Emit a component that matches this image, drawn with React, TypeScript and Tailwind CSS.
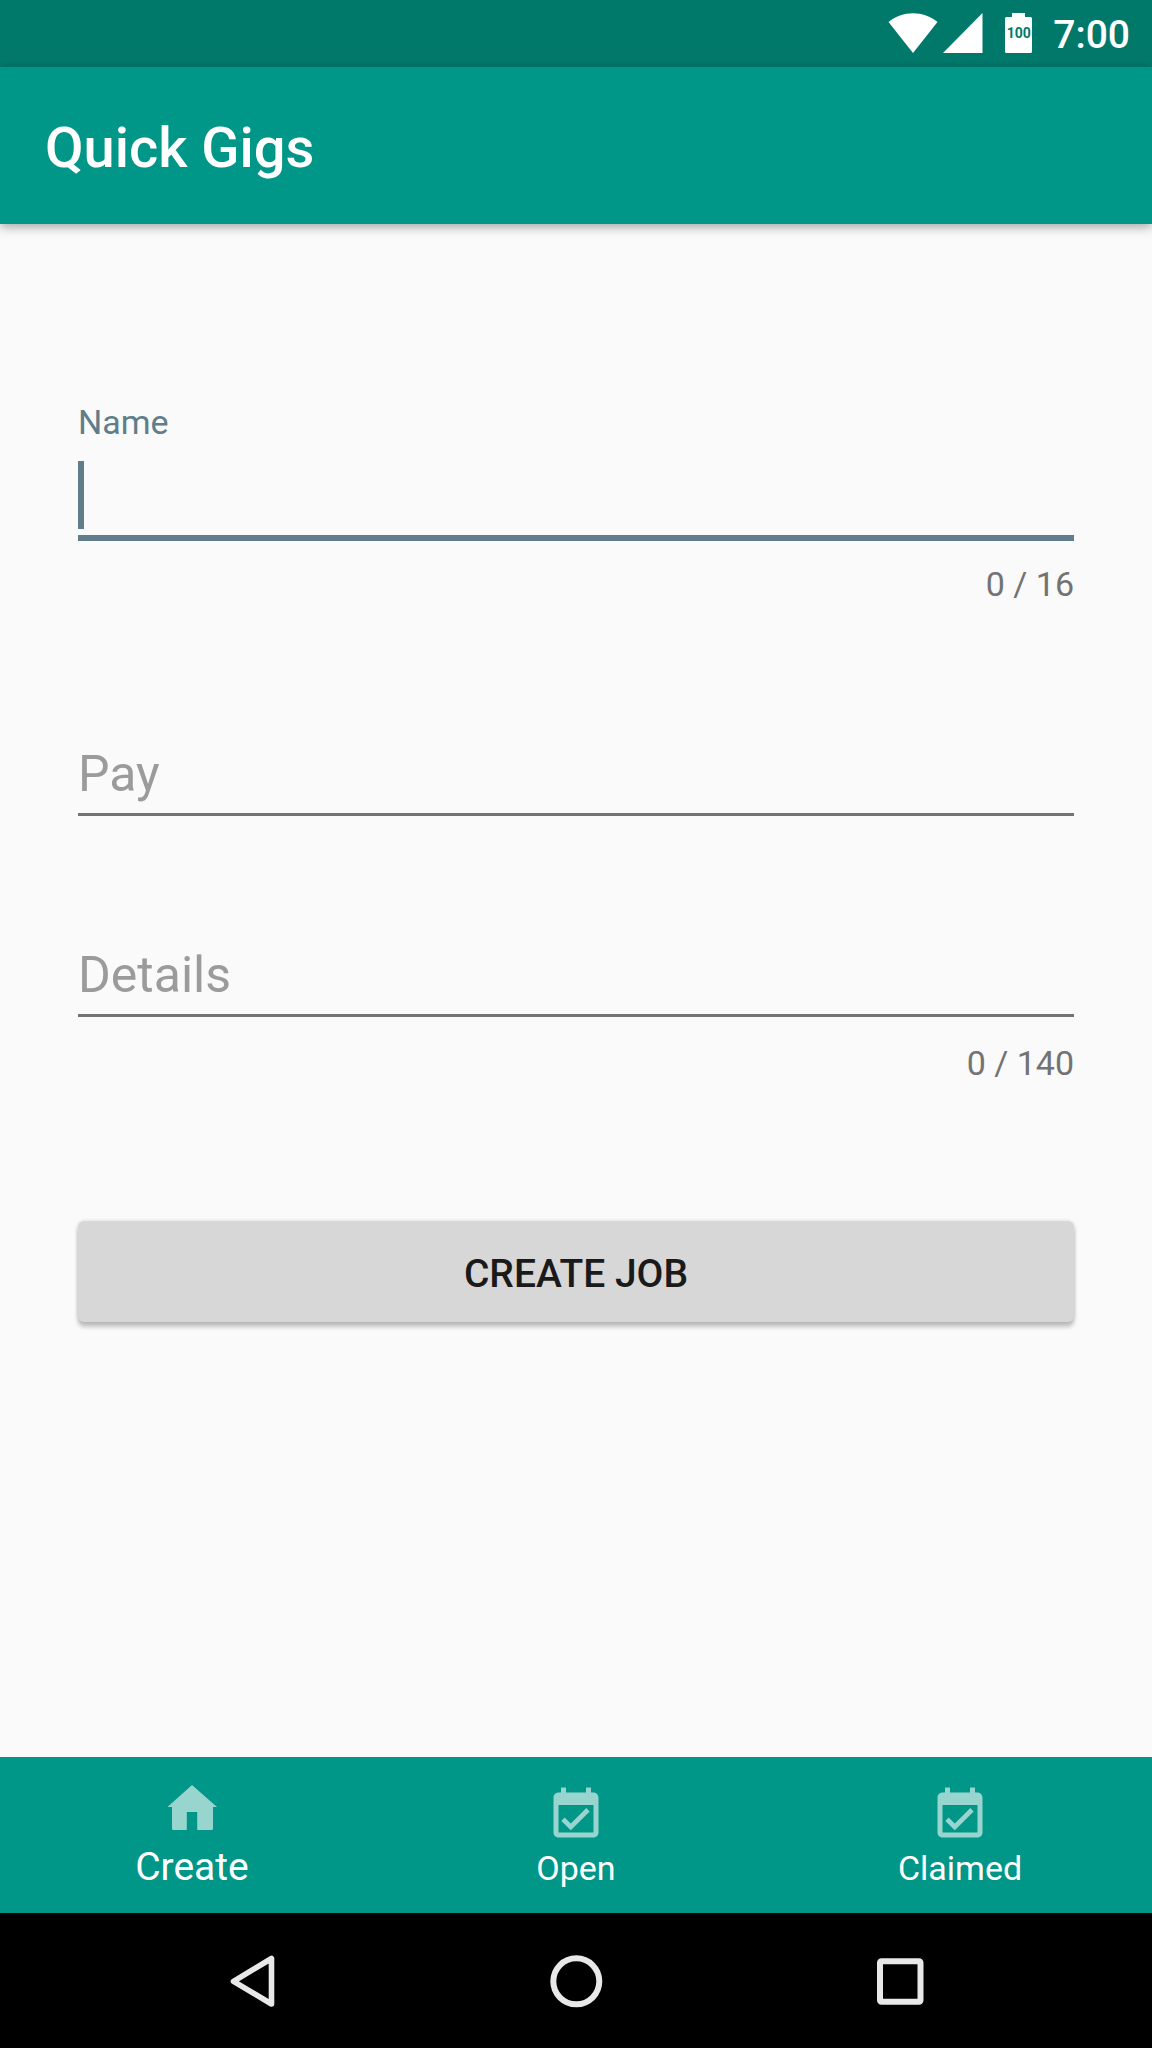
import { useState } from "react";
import clsx from "clsx";

type FieldProps = {
  id: string;
  label: string;
  max?: number;
  active: boolean;
  onActivate: (id: string) => void;
};

function TextField({ id, label, max, active, onActivate }: FieldProps) {
  const [value, setValue] = useState("");
  const floating = active || value !== "";

  return (
    <div>
      <div className="relative pt-[59px]">
        <label
          htmlFor={id}
          className={clsx(
            "pointer-events-none absolute left-0",
            floating ? "top-0 text-[34px] leading-10" : "top-[59px] text-[50px] leading-[70px]",
            active ? "text-[#607d8b]" : "text-[#9b9b9b]",
          )}
        >
          {label}
        </label>
        <input
          id={id}
          type="text"
          maxLength={max}
          value={value}
          onFocus={() => onActivate(id)}
          onChange={(e) => setValue(e.target.value)}
          className="block h-[74px] w-full bg-transparent text-[50px] leading-[70px] text-[#212121] caret-[#607d8b] outline-none"
        />
        {active && value === "" && (
          <span className="pointer-events-none absolute top-[59px] left-0 h-[68px] w-[6px] bg-[#607d8b]" />
        )}
      </div>
      <div className="h-[6px]">
        <div className={active ? "h-[6px] bg-[#607d8b]" : "h-[3px] bg-[#737373]"} />
      </div>
      {max && (
        <p className="pt-[23px] pb-[14px] text-right text-[34px] leading-10 text-[#737373]">
          {value.length} / {max}
        </p>
      )}
    </div>
  );
}

function StatusBar() {
  return (
    <div className="flex h-[67px] items-start justify-end bg-[#00796b] pt-[13px] pr-[22px] text-white">
      <svg className="h-10 w-[50px]" viewBox="0 0 50 40" fill="currentColor">
        <path d="M0.5 9C7.500 3.200 16 0.200 25 0.200S42.500 3.200 49.500 9L25 40z" />
      </svg>
      <svg className="ml-[5px] h-10 w-10" viewBox="0 0 40 40" fill="currentColor">
        <path d="M0 40L39.500 0V40z" />
      </svg>
      <div className="relative ml-[22px] h-10 w-[27px]">
        <svg className="h-10 w-[27px]" viewBox="0 0 27 40" fill="currentColor">
          <path d="M7 0H20V4H25.500Q27 4 27 5.500V38.500Q27 40 25.500 40H1.500Q0 40 0 38.500V5.500Q0 4 1.500 4H7z" />
        </svg>
        <span className="absolute inset-x-0 top-[12px] text-center text-[14px] leading-4 font-bold text-[#00796b]">
          100
        </span>
      </div>
      <span className="ml-[21px] text-[39px] leading-[44px] font-medium">7:00</span>
    </div>
  );
}

function HomeIcon() {
  return (
    <svg className="size-[60px] text-white/60" viewBox="0 0 60 60" fill="currentColor">
      <path d="M30 0L55 22H51V43.500Q51 45 49.500 45H35.200V27H24.800V45H11.500Q10 45 10 43.500V22H5.500z" />
    </svg>
  );
}

function CalendarIcon() {
  return (
    <svg className="size-[60px] text-white/60" viewBox="0 0 24 24" fill="currentColor">
      <path d="M19 3h-1V1h-2v2H8V1H6v2H5c-1.110 0-1.990.9-1.990 2L3 19c0 1.100.89 2 2 2h14c1.100 0 2-.9 2-2V5c0-1.100-.9-2-2-2zm0 16H5V8h14v11z" />
      <path d="M6.800 13.700l3.100 3.100 6.900-6.900" fill="none" stroke="currentColor" strokeWidth="1.900" />
    </svg>
  );
}

const tabs = [
  { name: "Create", icon: <HomeIcon /> },
  { name: "Open", icon: <CalendarIcon /> },
  { name: "Claimed", icon: <CalendarIcon /> },
];

function SystemNav() {
  return (
    <div className="flex h-[135px] bg-black px-[90px] text-[#e8e8e8]">
      <button aria-label="Back" className="flex flex-1 items-center justify-center">
        <svg className="size-[60px]" viewBox="0 0 60 60" fill="none" stroke="currentColor">
          <path d="M49.500 7.500V53L11.500 30.300z" strokeWidth="5.600" strokeLinejoin="round" />
        </svg>
      </button>
      <button aria-label="Home" className="flex flex-1 items-center justify-center">
        <svg className="size-[60px]" viewBox="0 0 60 60" fill="none" stroke="currentColor">
          <circle cx="30.300" cy="30.300" r="23" strokeWidth="6" />
        </svg>
      </button>
      <button aria-label="Overview" className="flex flex-1 items-center justify-center">
        <svg className="size-[60px]" viewBox="0 0 60 60" fill="none" stroke="currentColor">
          <rect x="10" y="10.300" width="40.500" height="40.500" rx="1.500" strokeWidth="6" />
        </svg>
      </button>
    </div>
  );
}

export default function App() {
  const [field, setField] = useState("name");
  const [tab, setTab] = useState("Create");

  return (
    <div className="flex min-h-screen flex-col bg-[#fafafa] font-['Roboto',sans-serif]">
      <StatusBar />
      <header className="flex h-[157px] items-center bg-[#009688] px-[45px] pt-1 shadow-[0_3px_10px_rgba(0,0,0,0.34)]">
        <h1 className="text-[56px] leading-[66px] font-medium text-white">Quick Gigs</h1>
      </header>

      <main className="flex-1 px-[78px] pt-[178px]">
        <form className="flex flex-col gap-[62px]" onSubmit={(e) => e.preventDefault()}>
          <TextField id="name" label="Name" max={16} active={field === "name"} onActivate={setField} />
          <TextField id="pay" label="Pay" active={field === "pay"} onActivate={setField} />
          <TextField id="details" label="Details" max={140} active={field === "details"} onActivate={setField} />
          <button
            type="submit"
            className="mt-[62px] h-[101px] rounded-[6px] bg-[#d7d7d7] pt-[6px] text-[39px] font-medium text-[#1a1a1a] uppercase shadow-[0_5px_4px_rgba(0,0,0,0.22),0_0_4px_rgba(0,0,0,0.14)]"
          >
            Create Job
          </button>
        </form>
      </main>

      <nav className="flex h-[156px] bg-[#009688] text-white">
        {tabs.map((t) => (
          <button
            key={t.name}
            onClick={() => setTab(t.name)}
            className="flex flex-1 flex-col items-center justify-end gap-[3px] pb-[25px]"
          >
            {t.icon}
            <span className={clsx("h-10", tab === t.name ? "text-[39px] leading-[38px]" : "text-[34px] leading-10")}>
              {t.name}
            </span>
          </button>
        ))}
      </nav>
      <SystemNav />
    </div>
  );
}
